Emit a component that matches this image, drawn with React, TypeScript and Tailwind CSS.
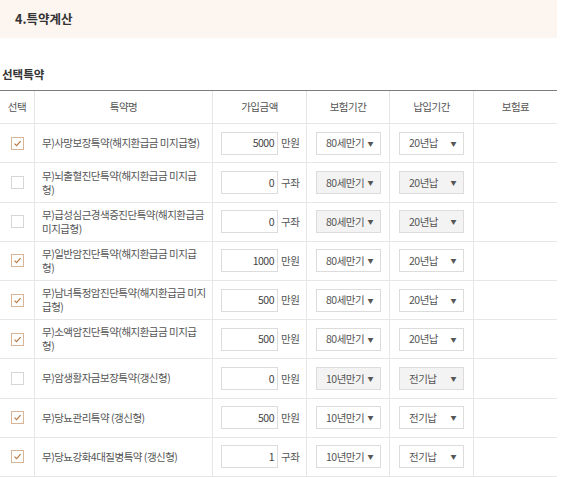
import React from "react";

type Rider = {
  name: string;
  checked: boolean;
  amount: string;
  unit: string;
  term: string;
  pay: string;
};

const riders: Rider[] = [
  { name: "무)사망보장특약(해지환급금 미지급형)", checked: true, amount: "5000", unit: "만원", term: "80세만기", pay: "20년납" },
  { name: "무)뇌출혈진단특약(해지환급금 미지급형)", checked: false, amount: "0", unit: "구좌", term: "80세만기", pay: "20년납" },
  { name: "무)급성심근경색증진단특약(해지환급금 미지급형)", checked: false, amount: "0", unit: "구좌", term: "80세만기", pay: "20년납" },
  { name: "무)일반암진단특약(해지환급금 미지급형)", checked: true, amount: "1000", unit: "만원", term: "80세만기", pay: "20년납" },
  { name: "무)남녀특정암진단특약(해지환급금 미지급형)", checked: true, amount: "500", unit: "만원", term: "80세만기", pay: "20년납" },
  { name: "무)소액암진단특약(해지환급금 미지급형)", checked: true, amount: "500", unit: "만원", term: "80세만기", pay: "20년납" },
  { name: "무)암생활자금보장특약(갱신형)", checked: false, amount: "0", unit: "만원", term: "10년만기", pay: "전기납" },
  { name: "무)당뇨관리특약 (갱신형)", checked: true, amount: "500", unit: "만원", term: "10년만기", pay: "전기납" },
  { name: "무)당뇨강화4대질병특약 (갱신형)", checked: true, amount: "1", unit: "구좌", term: "10년만기", pay: "전기납" },
];

const cols = "grid grid-cols-[35px_178px_94px_83px_84px_83px]";

function Check({ on }: { on: boolean }) {
  return (
    <span
      className={`grid size-[13px] place-items-center border bg-white ${
        on ? "border-[#d8b597]" : "border-[#d6d6d6]"
      }`}
    >
      {on && (
        <svg width="9" height="9" viewBox="0 0 9 9" fill="none">
          <path d="M1.5 4.6 L3.6 6.6 L7.6 2.2" stroke="#b77a48" strokeWidth="1.2" />
        </svg>
      )}
    </span>
  );
}

function Select({ value, off }: { value: string; off: boolean }) {
  return (
    <div
      className={`flex h-[23px] w-[65px] items-center justify-between border border-[#dcdcdc] pl-[9px] pr-[7px] ${
        off ? "bg-[#f3f3f3]" : "bg-white"
      }`}
    >
      <span>{value}</span>
      <span className="text-[6px] text-[#555]">▼</span>
    </div>
  );
}

export default function App() {
  return (
    <div
      className="w-[557px] bg-white text-[#555]"
      style={{ fontFamily: '"Noto Sans CJK KR", "Noto Sans", sans-serif' }}
    >
      {/* section title */}
      <div className="flex h-[38px] items-center bg-[#fdf6f0] pl-[15px] text-[12.5px] font-bold text-[#333]">
        4.특약계산
      </div>

      <div className="pl-[2px] pt-[28px] pb-[7px] text-[11.5px] font-bold text-[#333]">선택특약</div>

      <div className="border-t-[1.5px] border-[#7c7c7c] text-[10.5px] tracking-[-0.5px]">
        {/* header */}
        <div className={`${cols} h-[33px] border-b border-[#e6e6e6]`}>
          {["선택", "특약명", "가입금액", "보험기간", "납입기간", "보험료"].map((h, i) => (
            <div
              key={h}
              className={`flex items-center justify-center ${i < 5 ? "border-r border-[#e6e6e6]" : ""}`}
            >
              {h}
            </div>
          ))}
        </div>

        {riders.map((r) => {
          const off = !r.checked;
          return (
            <div key={r.name} className={`${cols} h-[39.2px] border-b border-[#e6e6e6]`}>
              <div className="flex items-center justify-center border-r border-[#e6e6e6]">
                <Check on={r.checked} />
              </div>
              <div className="flex items-center border-r border-[#e6e6e6] pl-[7px] pr-[5px] leading-[14px]">
                {r.name}
              </div>
              <div className="flex items-center gap-[3px] border-r border-[#e6e6e6] pl-[8px]">
                <div className="flex h-[23px] w-[57px] items-center justify-end border border-[#dcdcdc] bg-white pr-[3px] text-[#444]">
                  {r.amount}
                </div>
                <span>{r.unit}</span>
              </div>
              <div className="flex items-center border-r border-[#e6e6e6] pl-[9px]">
                <Select value={r.term} off={off} />
              </div>
              <div className="flex items-center border-r border-[#e6e6e6] pl-[9px]">
                <Select value={r.pay} off={off} />
              </div>
              <div />
            </div>
          );
        })}
      </div>
    </div>
  );
}
